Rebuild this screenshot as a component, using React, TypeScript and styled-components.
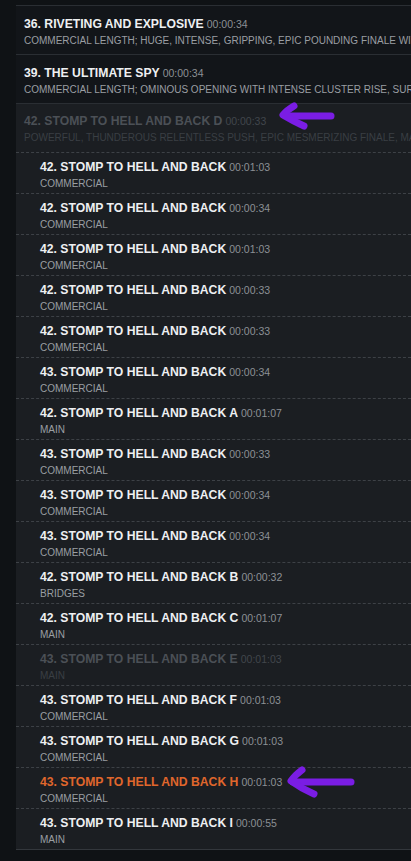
import React from 'react';
import styled, { createGlobalStyle } from 'styled-components';

const GlobalStyle = createGlobalStyle`
  html, body {
    margin: 0;
    padding: 0;
    background: #0f1215;
  }
  body {
    font-family: "Liberation Sans", Arial, sans-serif;
  }
`;

type Tone = 'normal' | 'dim' | 'active';

interface Track {
  title: string;
  time: string;
  sub: string;
  tone?: Tone;
}

const topTracks: Track[] = [
  {
    title: '36. RIVETING AND EXPLOSIVE',
    time: '00:00:34',
    sub: 'COMMERCIAL LENGTH; HUGE, INTENSE, GRIPPING, EPIC POUNDING FINALE WITH BIG HIT ENDING',
  },
  {
    title: '39. THE ULTIMATE SPY',
    time: '00:00:34',
    sub: 'COMMERCIAL LENGTH; OMINOUS OPENING WITH INTENSE CLUSTER RISE, SURGING ACTION',
  },
];

const parent: Track = {
  title: '42. STOMP TO HELL AND BACK D',
  time: '00:00:33',
  sub: 'POWERFUL, THUNDEROUS RELENTLESS PUSH, EPIC MESMERIZING FINALE, MASSIVE ENDING',
  tone: 'dim',
};

const children: Track[] = [
  { title: '42. STOMP TO HELL AND BACK', time: '00:01:03', sub: 'COMMERCIAL' },
  { title: '42. STOMP TO HELL AND BACK', time: '00:00:34', sub: 'COMMERCIAL' },
  { title: '42. STOMP TO HELL AND BACK', time: '00:01:03', sub: 'COMMERCIAL' },
  { title: '42. STOMP TO HELL AND BACK', time: '00:00:33', sub: 'COMMERCIAL' },
  { title: '42. STOMP TO HELL AND BACK', time: '00:00:33', sub: 'COMMERCIAL' },
  { title: '43. STOMP TO HELL AND BACK', time: '00:00:34', sub: 'COMMERCIAL' },
  { title: '42. STOMP TO HELL AND BACK A', time: '00:01:07', sub: 'MAIN' },
  { title: '43. STOMP TO HELL AND BACK', time: '00:00:33', sub: 'COMMERCIAL' },
  { title: '43. STOMP TO HELL AND BACK', time: '00:00:34', sub: 'COMMERCIAL' },
  { title: '43. STOMP TO HELL AND BACK', time: '00:00:34', sub: 'COMMERCIAL' },
  { title: '42. STOMP TO HELL AND BACK B', time: '00:00:32', sub: 'BRIDGES' },
  { title: '42. STOMP TO HELL AND BACK C', time: '00:01:07', sub: 'MAIN' },
  { title: '43. STOMP TO HELL AND BACK E', time: '00:01:03', sub: 'MAIN', tone: 'dim' },
  { title: '43. STOMP TO HELL AND BACK F', time: '00:01:03', sub: 'COMMERCIAL' },
  { title: '43. STOMP TO HELL AND BACK G', time: '00:01:03', sub: 'COMMERCIAL' },
  { title: '43. STOMP TO HELL AND BACK H', time: '00:01:03', sub: 'COMMERCIAL', tone: 'active' },
  { title: '43. STOMP TO HELL AND BACK I', time: '00:00:55', sub: 'MAIN' },
];

const titleColor: Record<Tone, string> = {
  normal: '#eef0f2',
  dim: '#4b5056',
  active: '#e0672c',
};

const timeColor: Record<Tone, string> = {
  normal: '#8c9095',
  dim: '#41464c',
  active: '#8c9095',
};

const subColor: Record<Tone, string> = {
  normal: '#9a9ea3',
  dim: '#3a3f44',
  active: '#9a9ea3',
};

const Page = styled.div`
  position: relative;
  width: 411px;
  height: 861px;
  overflow: hidden;
  background: #0f1215;
  padding-top: 5px;
  box-sizing: border-box;
`;

const List = styled.div`
  margin-left: 16px;
  display: flex;
  flex-direction: column;
`;

const TopRow = styled.div`
  height: 49px;
  box-sizing: border-box;
  border-top: 1px solid #2a2e33;
  background: #121519;
  padding: 10px 0 0 8px;
  overflow: hidden;
`;

const Group = styled.div`
  background: #1b1e22;
  border-top: 1px solid #2a2e33;
  border-bottom: 1px solid #33373c;
`;

const ParentRow = styled.div`
  height: 48px;
  box-sizing: border-box;
  padding: 9px 0 0 8px;
  overflow: hidden;
`;

const ChildRow = styled.div`
  height: 41px;
  box-sizing: border-box;
  border-top: 1px dashed #3d4146;
  padding: 6px 0 0 24px;
  overflow: hidden;
`;

const Title = styled.div<{ $tone: Tone }>`
  white-space: nowrap;
  font-size: 12.2px;
  font-weight: bold;
  line-height: 16px;
  color: ${(p) => titleColor[p.$tone]};
`;

const Time = styled.span<{ $tone: Tone }>`
  font-size: 10.5px;
  font-weight: normal;
  margin-left: 3px;
  color: ${(p) => timeColor[p.$tone]};
`;

const Sub = styled.div<{ $tone: Tone }>`
  white-space: nowrap;
  font-size: 10px;
  line-height: 14px;
  margin-top: 2px;
  color: ${(p) => subColor[p.$tone]};
`;

const Annotation = styled.svg`
  position: absolute;
  left: 0;
  top: 0;
  pointer-events: none;
`;

function TrackText({ track }: { track: Track }) {
  const tone = track.tone ?? 'normal';
  return (
    <>
      <Title $tone={tone}>
        {track.title}
        <Time $tone={tone}>{track.time}</Time>
      </Title>
      <Sub $tone={tone}>{track.sub}</Sub>
    </>
  );
}

export default function App() {
  return (
    <>
      <GlobalStyle />
      <Page>
        <List>
          {topTracks.map((t, i) => (
            <TopRow key={i}>
              <TrackText track={t} />
            </TopRow>
          ))}
          <Group>
            <ParentRow>
              <TrackText track={parent} />
            </ParentRow>
            {children.map((t, i) => (
              <ChildRow key={i}>
                <TrackText track={t} />
              </ChildRow>
            ))}
          </Group>
        </List>
        {/* hand-drawn arrows */}
        <Annotation width="411" height="861" viewBox="0 0 411 861">
          <g stroke="#7a1de4" strokeWidth="7" strokeLinecap="round" strokeLinejoin="round" fill="none">
            <path d="M331 116 L287 116" />
            <path d="M294 106 Q287 110 283 115 Q293 121 304 126" />
            <path d="M351 782 L293 782" />
            <path d="M302 770 Q295 775 291 781 Q302 789 314 794" />
          </g>
        </Annotation>
      </Page>
    </>
  );
}
